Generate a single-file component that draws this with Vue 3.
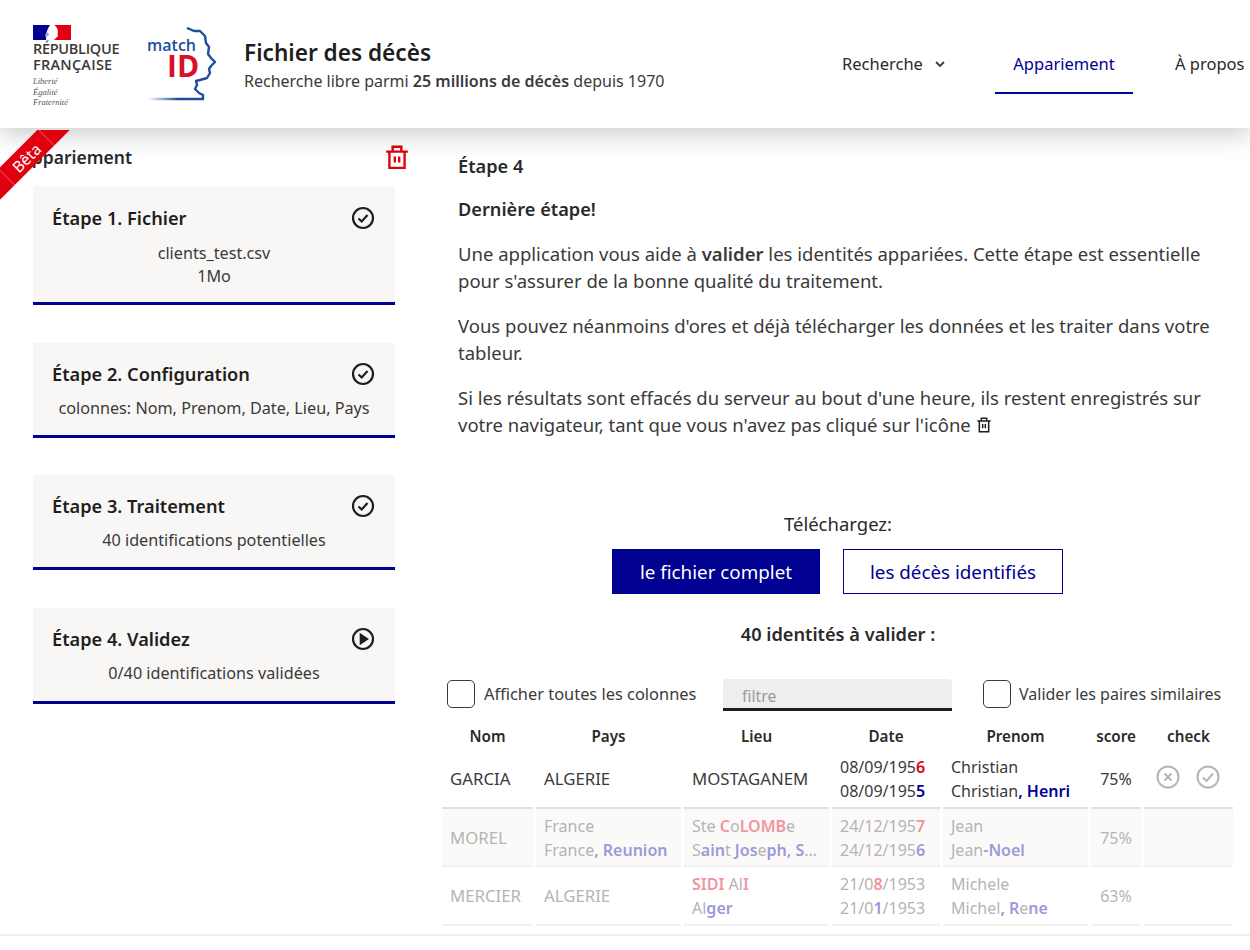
<script setup>
const steps = [
  { title: 'Étape 1. Fichier', lines: ['clients_test.csv', '1Mo'], done: true },
  { title: 'Étape 2. Configuration', lines: ['colonnes: Nom, Prenom, Date, Lieu, Pays'], done: true },
  { title: 'Étape 3. Traitement', lines: ['40 identifications potentielles'], done: true },
  { title: 'Étape 4. Validez', lines: ['0/40 identifications validées'], done: false }
]
const headers = ['Nom', 'Pays', 'Lieu', 'Date', 'Prenom', 'score', 'check']
</script>

<template>
  <div class="page">
    <header class="header">
      <div class="rf">
        <svg class="flag" width="38" height="15" viewBox="0 0 38 15">
          <rect x="0" y="0" width="17" height="15" fill="#000091" />
          <path d="M21 0H38V15H21C24 12 26 11 24.500 9.500C25 7 26 4 21 0Z" fill="#e1000f" />
          <path d="M17 0H21C25 3 24 6 23 8C24 11 21 13 18 15H13C14 13 12 12 13 9C14 6 15 3 17 0Z" fill="#fff" />
          <path d="M12 10L15 7L16 10L13 12Z" fill="#9a9ad0" />
        </svg>
        <div class="rf-name">RÉPUBLIQUE<br><span class="rf-second">FRANÇAISE</span></div>
        <div class="rf-motto">Liberté<br>Égalité<br>Fraternité</div>
      </div>
      <div class="mid">
        <svg class="face" width="72" height="76" viewBox="0 0 72 76">
          <defs>
            <linearGradient id="fade" gradientUnits="userSpaceOnUse" x1="1" x2="56" y1="72" y2="72">
              <stop offset="0" stop-color="#1d4f9c" stop-opacity="0" />
              <stop offset="0.55" stop-color="#1d4f9c" />
            </linearGradient>
          </defs>
          <path d="M40 1L47 4L53 4L58 9L59 16L62 20L61 27L64 31L68 35L64 39L62 42L63 46L60 51L53 53L49 54L50 58L48 62L52 66L56 68L56 72" fill="none" stroke="#1d4f9c" stroke-width="2.400" stroke-linejoin="round" />
          <path d="M1 72H57" fill="none" stroke="url(#fade)" stroke-width="2.400" />
        </svg>
        <span class="mid-match">match</span>
        <span class="mid-id">ID</span>
      </div>
      <div class="brand">
        <div class="brand-title">Fichier des décès</div>
        <div class="brand-sub">Recherche libre parmi <b>25 millions de décès</b> depuis 1970</div>
      </div>
      <nav class="nav">
        <a class="nav-item nav-search">Recherche
          <svg width="12" height="12" viewBox="0 0 12 12"><path d="M2 4L6 8L10 4" fill="none" stroke="#3a3a3a" stroke-width="1.800" /></svg>
        </a>
        <a class="nav-item nav-active">Appariement</a>
        <a class="nav-item nav-about">À propos</a>
      </nav>
    </header>

    <div class="body">
      <aside class="side">
        <div class="ribbon"><span>Bêta</span></div>
        <div class="side-head">
          <span class="side-title">Appariement</span>
          <svg class="bin" width="26" height="26" viewBox="0 0 24 24" fill="none" stroke="#e1000f" stroke-width="2.200">
            <path d="M2 7H22M5 7V22H19V7M8 7V2.500H16V7M10 11.500V17M14 11.500V17" />
          </svg>
        </div>
        <div class="steps">
          <section v-for="s in steps" :key="s.title" class="card">
            <div class="card-head">
              <h3>{{ s.title }}</h3>
              <svg width="24" height="24" viewBox="0 0 24 24" fill="none" stroke="#1e1e1e" stroke-width="2.200">
                <circle cx="12" cy="12" r="10" />
                <path v-if="s.done" d="M7.500 12.500L10.700 15.500L16.500 9" />
                <path v-else d="M9.800 7.800L16 12L9.800 16.200Z" fill="#1e1e1e" />
              </svg>
            </div>
            <p v-for="l in s.lines" :key="l">{{ l }}</p>
          </section>
        </div>
      </aside>

      <main class="main">
        <div class="h">Étape 4</div>
        <div class="h second">Dernière étape!</div>
        <p class="para">Une application vous aide à <b>valider</b> les identités appariées. Cette étape est essentielle pour s'assurer de la bonne qualité du traitement.</p>
        <p class="para">Vous pouvez néanmoins d'ores et déjà télécharger les données et les traiter dans votre tableur.</p>
        <p class="para">Si les résultats sont effacés du serveur au bout d'une heure, ils restent enregistrés sur votre navigateur, tant que vous n'avez pas cliqué sur l'icône
          <svg class="inline-bin" width="16" height="16" viewBox="0 0 24 24" fill="none" stroke="#1e1e1e" stroke-width="2.200"><path d="M2 6H22M5 6V22H19V6M8 6V2H16V6M10 10.500V17M14 10.500V17" /></svg>
        </p>

        <div class="dl-label">Téléchargez:</div>
        <div class="dl-btns">
          <button class="btn btn-full">le fichier complet</button>
          <button class="btn btn-line">les décès identifiés</button>
        </div>
        <div class="count">40 identités à valider :</div>

        <div class="opts">
          <span class="box"></span>
          <span class="opt-label">Afficher toutes les colonnes</span>
          <span class="filter">filtre</span>
          <span class="box box2"></span>
          <span class="opt-label">Valider les paires similaires</span>
        </div>

        <table class="tbl">
          <colgroup>
            <col class="c1"><col class="c2"><col class="c3"><col class="c4"><col class="c5"><col class="c6"><col class="c7">
          </colgroup>
          <thead>
            <tr><th v-for="h in headers" :key="h">{{ h }}</th></tr>
          </thead>
          <tbody>
            <tr class="r1">
              <td class="up">GARCIA</td>
              <td class="up">ALGERIE</td>
              <td class="up">MOSTAGANEM</td>
              <td><div>08/09/195<b class="del">6</b></div><div>08/09/195<b class="add">5</b></div></td>
              <td><div>Christian</div><div>Christian<b class="add">, Henri</b></div></td>
              <td class="ctr">75%</td>
              <td class="checks">
                <svg width="24" height="24" viewBox="0 0 24 24" fill="none" stroke="#b5b5b5" stroke-width="2"><circle cx="12" cy="12" r="10.500" /><path d="M8.500 8.500L15.500 15.500M15.500 8.500L8.500 15.500" /></svg>
                <svg width="24" height="24" viewBox="0 0 24 24" fill="none" stroke="#b5b5b5" stroke-width="2"><circle cx="12" cy="12" r="10.500" /><path d="M7 12.500L10.500 16L17 8.500" /></svg>
              </td>
            </tr>
            <tr class="dim tint">
              <td class="up">MOREL</td>
              <td><div>France</div><div>France<b class="add">, Reunion</b></div></td>
              <td><div>Ste <b class="del">C</b>o<b class="del">LOMB</b>e</div><div>S<b class="add">ain</b>t <b class="add">Jos</b>e<b class="add">ph, S</b>...</div></td>
              <td><div>24/12/195<b class="del">7</b></div><div>24/12/195<b class="add">6</b></div></td>
              <td><div>Jean</div><div>Jean<b class="add">-Noel</b></div></td>
              <td class="ctr">75%</td>
              <td></td>
            </tr>
            <tr class="dim">
              <td class="up">MERCIER</td>
              <td class="up">ALGERIE</td>
              <td><div><b class="del">SIDI</b> Al<b class="del">I</b></div><div>Al<b class="add">ger</b></div></td>
              <td><div>21/0<b class="del">8</b>/1953</div><div>21/0<b class="add">1</b>/1953</div></td>
              <td><div>Michele</div><div>Michel<b class="add">, </b><b class="add">R</b>e<b class="add">ne</b></div></td>
              <td class="ctr">63%</td>
              <td></td>
            </tr>
          </tbody>
        </table>
      </main>
    </div>
    <div class="foot-line"></div>
  </div>
</template>

<style scoped>
.page {
  width: 1250px;
  height: 950px;
  overflow: hidden;
  background: #fff;
  color: #2a2a2a;
  font-family: "Noto Sans", sans-serif;
  font-size: 16px;
}
.header {
  position: relative;
  z-index: 2;
  box-sizing: border-box;
  height: 128px;
  display: flex;
  align-items: flex-start;
  padding: 24px 0 0 33px;
  background: #fff;
  box-shadow: 0 4px 26px rgba(0, 0, 0, 0.24);
}
.rf { width: 114px; }
.flag { display: block; margin-top: 1px; }
.rf-name {
  margin-top: 1px;
  font-family: "Open Sans", sans-serif;
  font-weight: 600;
  font-size: 14.500px;
  line-height: 15.500px;
  color: #3a3a3a;
  letter-spacing: -0.300px;
}
.rf-second { letter-spacing: 0.250px; }
.rf-motto {
  margin-top: 4px;
  font-family: "Liberation Serif", serif;
  font-style: italic;
  font-size: 8.500px;
  line-height: 10.500px;
  color: #555;
}
.mid {
  position: relative;
  width: 97px;
  height: 80px;
}
.face { position: absolute; left: 0; top: 3px; }
.mid-match {
  position: absolute;
  left: 0;
  top: 11px;
  font-family: "Open Sans", sans-serif;
  font-weight: 600;
  font-size: 16px;
  line-height: 20px;
  color: #1d4f9c;
}
.mid-id {
  position: absolute;
  left: 20px;
  top: 26px;
  font-family: "Open Sans", sans-serif;
  font-weight: 700;
  font-size: 30px;
  line-height: 32px;
  color: #d8102a;
}
.brand { width: 598px; padding-top: 14px; }
.brand-title { font-size: 22.600px; font-weight: 600; line-height: 30px; color: #1e1e1e; }
.brand-sub { margin-top: 1px; font-size: 16px; line-height: 24px; color: #3a3a3a; }
.brand-sub b { font-weight: 600; }
.nav { display: flex; margin-top: 0; }
.nav-item {
  box-sizing: border-box;
  height: 70px;
  padding-top: 26px;
  font-size: 16.500px;
  line-height: 28px;
  color: #2a2a2a;
  white-space: nowrap;
}
.nav-search { display: flex; align-items: flex-start; width: 153px; }
.nav-search svg { margin: 8px 0 0 11px; }
.nav-active {
  width: 138px;
  text-align: center;
  color: #000091;
  border-bottom: 2px solid #000091;
}
.nav-about { margin-left: 42px; }

.body { display: flex; height: 806px; }
.side {
  position: relative;
  box-sizing: border-box;
  width: 425px;
  padding: 2px 0 0 33px;
  flex: none;
}
.ribbon {
  position: absolute;
  left: 0;
  top: 2px;
  width: 70px;
  height: 70px;
  overflow: hidden;
  z-index: 3;
  pointer-events: none;
}
.ribbon span {
  position: absolute;
  left: -34px;
  top: 16px;
  box-sizing: border-box;
  width: 120px;
  height: 23px;
  padding-top: 2px;
  line-height: 21px;
  text-align: center;
  font-size: 15.500px;
  color: #fff;
  background:
    linear-gradient(rgba(255, 255, 255, 0.3), rgba(255, 255, 255, 0.3)) 32px 0 / 1px 100% no-repeat,
    linear-gradient(rgba(255, 255, 255, 0.3), rgba(255, 255, 255, 0.3)) 88px 0 / 1px 100% no-repeat,
    #e1000f;
  transform: rotate(-45deg);
}
.side-head {
  display: flex;
  justify-content: space-between;
  align-items: center;
  width: 377px;
  height: 50px;
  margin: 2px 0 4px;
}
.side-title { margin-left: -13px; font-size: 17.500px; font-weight: 600; color: #2a2a2a; }
.steps { display: flex; flex-direction: column; gap: 37.500px; margin-top: 2px; }
.card {
  box-sizing: border-box;
  width: 362px;
  height: 95px;
  padding: 17px 19px 14px;
  background: #f8f7f5;
  border-bottom: 3px solid #000091;
}
.card:first-child { height: 119px; padding-top: 18px; }
.card:last-child { height: 96px; }
.card-head { display: flex; justify-content: space-between; align-items: center; height: 28px; margin-bottom: 9px; }
.card:first-child .card-head { margin-bottom: 10px; }
.card-head svg { margin-right: 1px; }
.card h3 { margin: 0; font-size: 18.200px; font-weight: 600; color: #1e1e1e; line-height: 28px; white-space: nowrap; }
.card p { margin: 0; text-align: center; font-size: 16.200px; line-height: 23px; color: #3a3a3a; white-space: nowrap; }

.main { width: 790px; box-sizing: border-box; padding: 25px 0 0 33px; }
.h { font-size: 18.200px; font-weight: 600; line-height: 27px; color: #2a2a2a; }
.second { margin: 16px 0 -1px; }
.para {
  width: 760px;
  margin: 18px 0 0;
  font-size: 18.500px;
  line-height: 27px;
  color: #3a3a3a;
}
.para b { font-weight: 600; }
.inline-bin { vertical-align: -1px; }
.dl-label {
  width: 760px;
  margin: 72px 0 0;
  text-align: center;
  font-size: 18.500px;
  line-height: 27px;
}
.dl-btns { display: flex; gap: 23px; margin: 12px 0 0 154px; }
.btn {
  box-sizing: border-box;
  height: 45px;
  padding: 0;
  font: inherit;
  font-size: 18.800px;
  border: 1px solid #000091;
  border-radius: 0;
}
.btn-full { width: 208px; background: #000091; color: #fff; }
.btn-line { width: 220px; background: #fff; color: #000091; }
.count {
  width: 760px;
  margin-top: 27px;
  text-align: center;
  font-size: 18.200px;
  font-weight: 600;
  line-height: 26px;
}
.opts {
  display: flex;
  align-items: center;
  height: 32px;
  margin: 32px 0 0 -11px;
}
.box {
  box-sizing: border-box;
  width: 28px;
  height: 28px;
  flex: none;
  border: 1.500px solid #3a3a3a;
  border-radius: 5px;
  margin: 0 9px 3px 0;
}
.box2 { margin: 0 8px 3px 31px; }
.opt-label {
  flex: none;
  width: 230px;
  padding-bottom: 3px;
  font-size: 16.400px;
  white-space: nowrap;
  color: #3a3a3a;
}
.box2 + .opt-label { font-size: 16px; }
.filter {
  box-sizing: border-box;
  width: 229px;
  height: 32px;
  flex: none;
  margin-left: 9px;
  padding: 7px 0 0 19px;
  font-size: 15.800px;
  line-height: 20px;
  color: #9a9a9a;
  background: #eeeeee;
  border-bottom: 3px solid #1e1e1e;
  border-radius: 4px 4px 0 0;
}
.tbl {
  table-layout: fixed;
  width: 797px;
  margin: 8px 0 0 -19px;
  border-collapse: separate;
  border-spacing: 3px 0;
  font-size: 16px;
  line-height: 24px;
}
.c1 { width: 91px; }
.c2 { width: 145px; }
.c3 { width: 145px; }
.c4 { width: 108px; }
.c5 { width: 145px; }
.c6 { width: 50px; }
.c7 { width: 89px; }
.tbl th { height: 33px; padding: 0; font-size: 15.200px; font-weight: 600; color: #2a2a2a; text-align: center; }
.tbl td {
  padding: 5px 8px 4px;
  border-bottom: 2px solid #e0e0e0;
  white-space: nowrap;
  overflow: hidden;
  color: #3a3a3a;
}
.tbl .up { font-size: 16.800px; }
.tbl .r1 td { padding-top: 3px; }
.tbl .dim td { color: #b4b4b4; border-bottom-color: #f1f1f1; }
.tbl .tint td { background: #fbfaf9; padding-bottom: 3px; }
.tbl b { font-weight: 600; }
.del { color: #e1000f; }
.add { color: #000091; }
.dim .del { color: #f0959c; }
.dim .add { color: #9a9ad8; }
.tbl .ctr { text-align: center; padding-left: 0; padding-right: 0; }
.tbl .r1 .checks { padding: 0 12px 7px; }
.checks svg { vertical-align: middle; }
.checks svg + svg { margin-left: 16px; }
.foot-line { height: 2px; background: #efefef; }
</style>
